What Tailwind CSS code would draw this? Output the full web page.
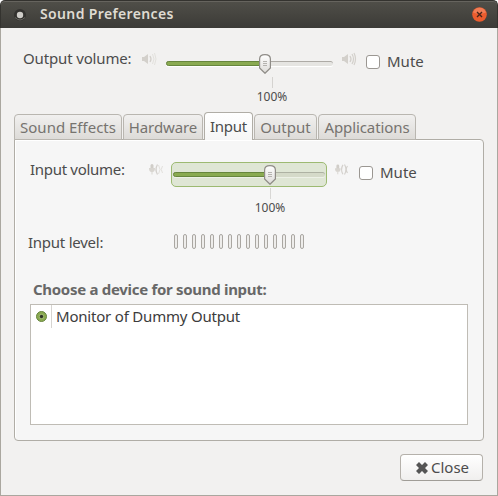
<!DOCTYPE html>
<html lang="en">
<head>
  <meta charset="UTF-8" />
  <title>Sound Preferences</title>
  <script src="https://cdn.jsdelivr.net/npm/@tailwindcss/browser@4"></script>
</head>
<body class="bg-white w-[498px] h-[496px] overflow-hidden font-['Noto_Sans','Open_Sans',sans-serif] text-[15px] leading-5 text-[#4c4c4c] whitespace-nowrap">
  <!-- Shared icons -->
  <svg class="absolute w-0 h-0">
    <defs>
      <linearGradient id="knob" x1="0" y1="0" x2="0" y2="1">
        <stop offset="0" stop-color="#ffffff" />
        <stop offset="1" stop-color="#dddbd8" />
      </linearGradient>
      <symbol id="thumb" viewBox="0 0 12 20">
        <path d="M.6 5Q.6.6 6 .6T11.400 5V14L6 19.300 .6 14Z" fill="url(#knob)" stroke="#8f8c87" stroke-width="1.200" />
        <path d="M4 7.500h4M4 9.500h4M4 11.500h4" stroke="#b5b3af" />
      </symbol>
      <symbol id="speaker" viewBox="0 0 15 14">
        <path d="M0 5h2l4-3v10l-4-3H0Z" fill="#d3d0cb" />
        <path d="M8 4q2 3 0 6" fill="none" stroke="#d3d0cb" stroke-width="1.300" />
      </symbol>
      <symbol id="mic" viewBox="0 0 15 14">
        <rect x="1.500" y="1" width="3" height="7" rx="1.500" fill="#d0cdc8" />
        <path d="M0 5h6Q6 9 3.500 9v2.500h-1V9Q0 9 0 5" fill="#d8d5d0" />
        <path d="M8.500 1.500q-3 5 0 10" fill="none" stroke="#d4d1cd" stroke-width="1.300" />
      </symbol>
    </defs>
  </svg>

  <div class="w-[498px] h-[496px] flex flex-col">
    <!-- Title bar -->
    <header class="h-7 shrink-0 flex items-center pl-[13px] pr-[10px] rounded-t-[5px] border-t border-x border-[#34332f] bg-linear-to-b from-[#504f49] to-[#3c3b37] shadow-[inset_0_1px_0_#66645e]">
      <svg class="w-3 h-3" viewBox="0 0 12 12">
        <circle cx="6" cy="6" r="6" fill="#33322f" />
        <path d="M1 8.500q5 5 10 0" fill="none" stroke="#6a6963" />
        <circle cx="6" cy="6" r="3.200" fill="#cfcdc8" />
      </svg>
      <h1 class="ml-[14px] -mt-px w-[134px] text-[14px] font-semibold tracking-[0.36px] text-[#dfdbd2]">Sound Preferences</h1>
      <svg class="ml-auto w-[15px] h-[15px]" viewBox="0 0 15 15">
        <circle cx="7.500" cy="7.500" r="7.300" fill="#eb5c2e" />
        <path d="M1 5.500a6.800 6.800 0 0 1 13 0Q7.500 8 1 5.500" fill="#f17c55" />
        <path d="M5 5l5 5M10 5l-5 5" stroke="#4b2418" stroke-width="1.400" />
      </svg>
    </header>

    <main class="flex-1 border border-t-0 border-[#aaa79f] bg-[#f2f1f0] flex flex-col pl-[13px]">
      <!-- Output volume -->
      <section class="h-[84px] flex items-start">
        <div class="ml-[9px] mt-5 w-[119px] tracking-[-0.15px]">Output volume:</div>
        <svg class="mt-6 w-[15px] h-[14px]">
          <use href="#speaker" />
          <path d="M10.500 2q3 5 0 10M12.500 1q3 6 0 12" fill="none" stroke="#e3e1dd" />
        </svg>
        <div class="relative ml-[9px] mt-[33px] w-[167px] h-[5px] rounded-full border-t border-[#aeaba6] bg-[#e6e5e2] shadow-[0_1px_0_#fff]">
          <div class="absolute left-0 -top-px w-[100px] h-[5px] rounded-full border border-[#67863d] bg-[#8aaa51]"></div>
          <svg class="absolute left-[93px] -top-[8px] w-3 h-5"><use href="#thumb" /></svg>
          <div class="absolute left-[106px] top-[15px] w-px h-[11px] bg-[#d5d3d0]"></div>
          <div class="absolute left-[86px] top-[27px] w-10 text-center text-[12px] leading-4">100%</div>
        </div>
        <svg class="ml-[9px] mt-6 w-[15px] h-[14px]">
          <use href="#speaker" />
          <path d="M10 2q3 5 0 10M12 1q3 6 0 12" fill="none" stroke="#d3d0cb" stroke-width="1.200" />
        </svg>
        <div class="ml-[9px] mt-[27px] w-[14px] h-[14px] rounded-[3px] border border-[#9b9792] bg-white"></div>
        <div class="ml-[7px] mt-[23px]">Mute</div>
      </section>

      <!-- Tabs -->
      <nav class="relative z-10 h-7 -mb-px flex items-end gap-px text-[#76736f]">
        <div class="w-[108px] h-[26px] pt-[2px] text-center rounded-t-[4px] border border-[#b9b6b0] bg-linear-to-b from-[#f1f0ef] to-[#dddbd8]">Sound Effects</div>
        <div class="w-[80px] h-[26px] pt-[2px] text-center rounded-t-[4px] border border-[#b9b6b0] bg-linear-to-b from-[#f1f0ef] to-[#dddbd8] tracking-[-0.1px]">Hardware</div>
        <div class="w-[49px] h-7 pt-[3px] text-center rounded-t-[4px] border border-b-0 border-[#b0ada6] bg-linear-to-b from-white to-[#f6f6f6] text-[#4c4c4c] tracking-[-0.25px]">Input</div>
        <div class="w-[63px] h-[26px] pt-[2px] text-center rounded-t-[4px] border border-[#b9b6b0] bg-linear-to-b from-[#f1f0ef] to-[#dddbd8]">Output</div>
        <div class="w-[98px] h-[26px] pt-[2px] text-center rounded-t-[4px] border border-[#b9b6b0] bg-linear-to-b from-[#f1f0ef] to-[#dddbd8] tracking-[-0.1px]">Applications</div>
      </nav>

      <section class="w-[470px] h-[302px] rounded-[4px] rounded-tl-none border border-[#b0ada6] bg-[#f6f6f6] shadow-[inset_1px_1px_0_#fff] flex flex-col">
        <!-- Input volume -->
        <div class="h-[93px] flex items-start">
          <div class="ml-[15px] mt-[19px] w-[119px] tracking-[-0.3px]">Input volume:</div>
          <svg class="mt-[23px] w-[15px] h-[14px]">
            <use href="#mic" />
            <path d="M9.500 2q3 4.500 0 9M13.500 3q-2.500 3.500 0 7" fill="none" stroke="#e2e0dc" />
          </svg>
          <div class="relative ml-[7px] mt-[22px] w-[156px] h-[25px] rounded-[5px] border border-[#9dba72] bg-[#dfe6d5]">
            <div class="mx-px mt-[9px] h-[5px] rounded-full border-t border-[#aeb2a3] bg-[#d5dac9] shadow-[0_1px_0_#edf1e7]"></div>
            <div class="absolute left-px top-[9px] w-[97px] h-[5px] rounded-full border border-[#67863d] bg-[#8aaa51]"></div>
            <svg class="absolute left-[92px] top-[2px] w-3 h-5"><use href="#thumb" /></svg>
            <div class="absolute left-[98px] top-[25px] w-px h-[11px] bg-[#d8d7d5]"></div>
            <div class="absolute left-[78px] top-[37px] w-10 text-center text-[12px] leading-4">100%</div>
          </div>
          <svg class="ml-[8px] mt-[23px] w-[14px] h-[14px]">
            <use href="#mic" />
            <path d="M9.500 1.500q3 5 0 10M12.500 3q-2.500 3.500 0 7" fill="none" stroke="#d4d1cd" stroke-width="1.200" />
          </svg>
          <div class="ml-[10px] mt-[26px] w-[14px] h-[14px] rounded-[3px] border border-[#9b9792] bg-white"></div>
          <div class="ml-[7px] mt-[22px]">Mute</div>
        </div>

        <!-- Input level -->
        <div class="h-[46px] flex items-start">
          <div class="ml-[13px] -mt-px w-[146px] tracking-[-0.25px]">Input level:</div>
          <div class="mt-px flex gap-[5px]" id="level"></div>
        </div>

        <!-- Devices -->
        <h2 class="ml-[18px] h-[25px] font-bold tracking-[-0.3px] text-[#686868]">Choose a device for sound input:</h2>
        <div class="ml-[15px] w-[438px] h-[121px] border border-[#bfbcb5] bg-white">
          <div class="h-[23px] flex items-center">
            <svg class="ml-[5px] w-[11px] h-[11px]" viewBox="0 0 11 11">
              <circle cx="5.500" cy="5.500" r="5" fill="#8aaa51" stroke="#66843d" />
              <circle cx="5.500" cy="5.500" r="2.500" fill="#a1ba74" />
              <circle cx="5.500" cy="5.500" r="1.700" fill="#303626" />
            </svg>
            <div class="ml-1 w-px h-full bg-[#d6d4d1]"></div>
            <div class="ml-1 -mt-px tracking-[-0.2px] text-[#3c3c3c]">Monitor of Dummy Output</div>
          </div>
        </div>
      </section>

      <button class="ml-[386px] mt-[13px] w-[83px] h-[27px] pl-[15px] flex items-center gap-[3px] rounded-[4px] border border-[#b5b1ab] border-b-[#a09d97] bg-linear-to-b from-white to-[#f0efee]">
        <svg class="w-3 h-3" viewBox="0 0 12 12">
          <path d="M3 0l3 3 3-3 3 3-3 3 3 3-3 3-3-3-3 3-3-3 3-3-3-3Z" fill="#555" />
        </svg>
        <span class="-mt-px">Close</span>
      </button>
    </main>
  </div>

  <script>
    const level = document.getElementById("level");
    for (let i = 0; i < 15; i++) {
      level.innerHTML += `<div class="w-[4px] h-[15px] rounded-[2px] border border-[#aaa7a2] bg-[#eeedeb]"></div>`;
    }
  </script>
</body>
</html>
